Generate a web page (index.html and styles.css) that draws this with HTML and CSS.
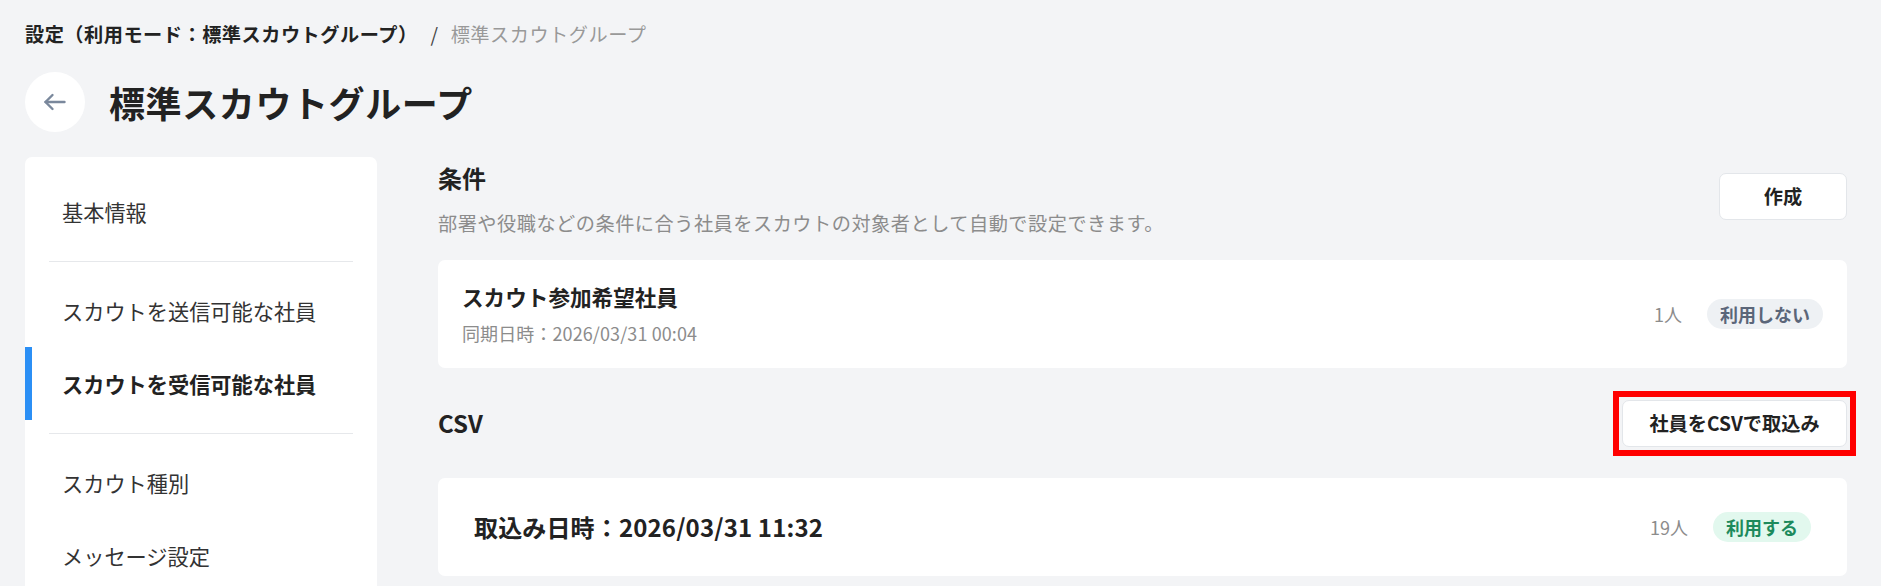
FILE: index.html
```html
<!DOCTYPE html>
<html lang="ja">
<head>
<meta charset="utf-8">
<title>標準スカウトグループ</title>
<link rel="stylesheet" href="styles.css">
</head>
<body>
<div class="page">
  <nav class="breadcrumb">
    <span class="crumb-parent">設定（利用モード：標準スカウトグループ）</span>
    <span class="crumb-sep">/</span>
    <span class="crumb-current">標準スカウトグループ</span>
  </nav>

  <header class="page-header">
    <button class="back-btn" type="button" aria-label="戻る">
      <svg width="24" height="24" viewBox="0 0 24 24" fill="none" stroke="#7a889c" stroke-width="2.4" stroke-linecap="round" stroke-linejoin="round">
        <path d="M21.5 12H2.5"/>
        <path d="M9.5 5L2.5 12L9.5 19"/>
      </svg>
    </button>
    <h1 class="page-title">標準スカウトグループ</h1>
  </header>

  <div class="layout">
    <aside class="sidebar">
      <ul class="nav-group">
        <li class="nav-item">基本情報</li>
      </ul>
      <div class="nav-divider"></div>
      <ul class="nav-group">
        <li class="nav-item">スカウトを送信可能な社員</li>
        <li class="nav-item active">スカウトを受信可能な社員</li>
      </ul>
      <div class="nav-divider"></div>
      <ul class="nav-group">
        <li class="nav-item">スカウト種別</li>
        <li class="nav-item">メッセージ設定</li>
      </ul>
    </aside>

    <main class="main">
      <section class="section">
        <div class="section-head top">
          <div class="section-text">
            <h2 class="section-title">条件</h2>
            <p class="section-desc">部署や役職などの条件に合う社員をスカウトの対象者として自動で設定できます。</p>
          </div>
          <button class="btn btn-create" type="button">作成</button>
        </div>
        <div class="card card-condition">
          <div class="card-body">
            <div class="card-title">スカウト参加希望社員</div>
            <div class="card-sub">同期日時：2026/03/31 00:04</div>
          </div>
          <div class="card-meta">
            <span class="count">1人</span>
            <span class="badge badge-off">利用しない</span>
          </div>
        </div>
      </section>

      <section class="section section-csv">
        <div class="section-head center">
          <h2 class="section-title">CSV</h2>
          <button class="btn btn-import" type="button">社員をCSVで取込み</button>
        </div>
        <div class="card card-csv">
          <div class="card-title-lg">取込み日時：2026/03/31 11:32</div>
          <div class="card-meta">
            <span class="count">19人</span>
            <span class="badge badge-on">利用する</span>
          </div>
        </div>
      </section>
    </main>
  </div>
</div>
</body>
</html>
```

FILE: styles.css
```css
html, body {
  margin: 0;
  padding: 0;
  overflow: hidden;
}

body {
  background: #f3f4f6;
  color: #222;
  font-family: "Noto Sans CJK JP", "Noto Sans", sans-serif;
}

ul {
  list-style: none;
  margin: 0;
  padding: 0;
}

h1, h2, p {
  margin: 0;
}

.page {
  padding: 20px 34px 0 25px;
}

/* breadcrumb */
.breadcrumb {
  display: flex;
  align-items: center;
  font-size: 19.2px;
  line-height: 28.8px;
  letter-spacing: 0.5px;
}

.crumb-parent {
  font-weight: 700;
  color: #222;
}

.crumb-sep {
  margin: 0 12px 0 13px;
  color: #444;
}

.crumb-current {
  color: #999;
}

/* header */
.page-header {
  display: flex;
  align-items: center;
  gap: 24px;
  margin-top: 23px;
}

.back-btn {
  width: 60px;
  height: 60px;
  border: none;
  border-radius: 50%;
  background: #fff;
  display: flex;
  align-items: center;
  justify-content: center;
  padding: 0;
}

.page-title {
  font-size: 36px;
  line-height: 48px;
  font-weight: 700;
  letter-spacing: 0.6px;
  color: #222;
}

/* layout */
.layout {
  display: grid;
  grid-template-columns: 352px 1fr;
  column-gap: 61px;
  margin-top: 25px;
}

/* sidebar */
.sidebar {
  background: #fff;
  border-radius: 7px;
  padding: 6px 0 12px;
}

.nav-group {
  padding: 12.5px 0;
}

.nav-divider {
  margin: 0 24px;
  border-top: 1px solid #e6e8eb;
}

.nav-item {
  height: 73px;
  display: flex;
  align-items: center;
  padding-left: 37px;
  font-size: 21.2px;
  color: #333;
}

.nav-item.active {
  font-weight: 700;
  color: #222;
  box-shadow: inset 7px 0 0 #2b8ff5;
}

/* main */
.main {
  padding-top: 3px;
}

.section-head {
  display: flex;
  justify-content: space-between;
}

.section-head.top {
  align-items: flex-start;
}

.section-head.center {
  align-items: center;
}

.section-title {
  font-size: 24px;
  line-height: 36px;
  font-weight: 700;
  color: #222;
}

.section-desc {
  margin-top: 13.6px;
  font-size: 19.2px;
  line-height: 28.8px;
  letter-spacing: 0.5px;
  color: #8c8c8c;
}

.btn {
  background: #fff;
  border: 1px solid #e3e6ea;
  border-radius: 7px;
  font-family: inherit;
  font-size: 19.2px;
  font-weight: 700;
  color: #222;
  padding: 0 24px;
}

.btn-create {
  margin-top: 13px;
  width: 128px;
  height: 47px;
}

.btn-import {
  position: relative;
  height: 47px;
  width: 225px;
}

/* red annotation frame drawn over the import button */
.btn-import::after {
  content: "";
  position: absolute;
  inset: -10px;
  border: 6px solid #ff0000;
  pointer-events: none;
}

.card {
  background: #fff;
  border-radius: 7px;
  display: flex;
  align-items: center;
  justify-content: space-between;
}

.card-condition {
  margin-top: 21.6px;
  padding: 21.6px 24px;
}

.card-title {
  font-size: 21.6px;
  line-height: 32.4px;
  font-weight: 700;
  color: #222;
}

.card-sub {
  margin-top: 6px;
  font-size: 18px;
  line-height: 26.4px;
  letter-spacing: 0.1px;
  color: #8c8c8c;
}

.card-meta {
  display: flex;
  align-items: center;
  gap: 25px;
}

.count {
  font-size: 18px;
  color: #8c8c8c;
}

.badge {
  height: 30px;
  line-height: 30px;
  padding: 0 13px;
  border-radius: 15px;
  font-size: 18px;
  font-weight: 700;
}

.badge-off {
  background: #eef1f4;
  color: #5b6679;
}

.badge-on {
  background: #e2f8ee;
  color: #1d8a5c;
}

.section-csv {
  margin-top: 32px;
}

.card-csv {
  margin-top: 31px;
  padding: 31px 36px;
}

.card-title-lg {
  font-size: 24px;
  line-height: 36px;
  font-weight: 700;
  letter-spacing: 0.15px;
  color: #222;
}
```
